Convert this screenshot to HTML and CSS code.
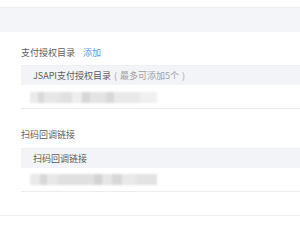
FILE: index.html
```html
<!DOCTYPE html>
<html lang="zh-CN">
<head>
    <meta charset="UTF-8">
    <title>开发配置</title>
    <link rel="stylesheet" href="styles.css">
</head>
<body>
    <div class="topbar"></div>

    <div class="section">
        <div class="title">支付授权目录<a class="add" href="#">添加</a></div>
        <div class="table">
            <div class="thead">JSAPI支付授权目录<span class="hint">( 最多可添加5个 )</span></div>
            <div class="row"><div class="masked masked-a"></div></div>
        </div>
    </div>

    <div class="section second">
        <div class="title">扫码回调链接</div>
        <div class="table">
            <div class="thead">扫码回调链接</div>
            <div class="row"><div class="masked masked-b"></div></div>
        </div>
    </div>

    <div class="footer"></div>
</body>
</html>
```

FILE: styles.css
```css
body {
    margin: 0;
    font-family: "Noto Sans CJK SC", "Noto Sans", sans-serif;
    font-size: 9px;
    color: #5c5c5c;
    background: #fff;
}

.topbar {
    margin-top: 7px;
    height: 24px;
    border-top: 1px solid #ebecef;
    background-color: #f4f5f8;
}

.section {
    padding-left: 21px;
    margin-top: 15px;
}

.section.second {
    margin-top: 20px;
}

.title {
    line-height: 12px;
    height: 12px;
}

.add {
    margin-left: 8px;
    color: #5b9be0;
    text-decoration: none;
}

.table {
    margin-top: 6px;
}

.second .table {
    margin-top: 7px;
}

.thead {
    height: 20px;
    line-height: 20px;
    padding-left: 12px;
    background-color: #f3f4f7;
    border-top: 1px solid #eeeff2;
    box-sizing: border-box;
}

.hint {
    margin-left: 3px;
    color: #a0a0a0;
    word-spacing: 1px;
}

.row {
    height: 23px;
    border-bottom: 1px solid #ececee;
    display: flex;
    align-items: center;
    padding-left: 9px;
}

.masked {
    width: 127px;
    height: 11px;
    filter: blur(0.8px);
}

.masked-a {
    margin-top: 2px;
    background: linear-gradient(to right,
        #ebebeb 0, #ebebeb 8px, #d9d9d9 8px, #d9d9d9 14px, #e7e7e7 14px, #e7e7e7 30px,
        #e1e1e1 30px, #e1e1e1 42px, #eeeeee 42px, #eeeeee 52px, #d7d7d7 52px, #d7d7d7 60px,
        #e4e4e4 60px, #e4e4e4 76px, #d9d9d9 76px, #d9d9d9 84px, #e9e9e9 84px, #e9e9e9 110px,
        #f0f0f0 110px, #f0f0f0 127px);
}

.masked-b {
    margin-top: -1px;
    background: linear-gradient(to right,
        #eaeaea 0, #eaeaea 10px, #d8d8d8 10px, #d8d8d8 17px, #e8e8e8 17px, #e8e8e8 28px,
        #e0e0e0 28px, #e0e0e0 64px, #d4d4d4 64px, #d4d4d4 72px, #e6e6e6 72px, #e6e6e6 82px,
        #d8d8d8 82px, #d8d8d8 92px, #e9e9e9 92px, #e9e9e9 106px, #e3e3e3 106px, #e3e3e3 127px);
}

.footer {
    margin-top: 23px;
    border-top: 1px solid #efeff2;
}
```
